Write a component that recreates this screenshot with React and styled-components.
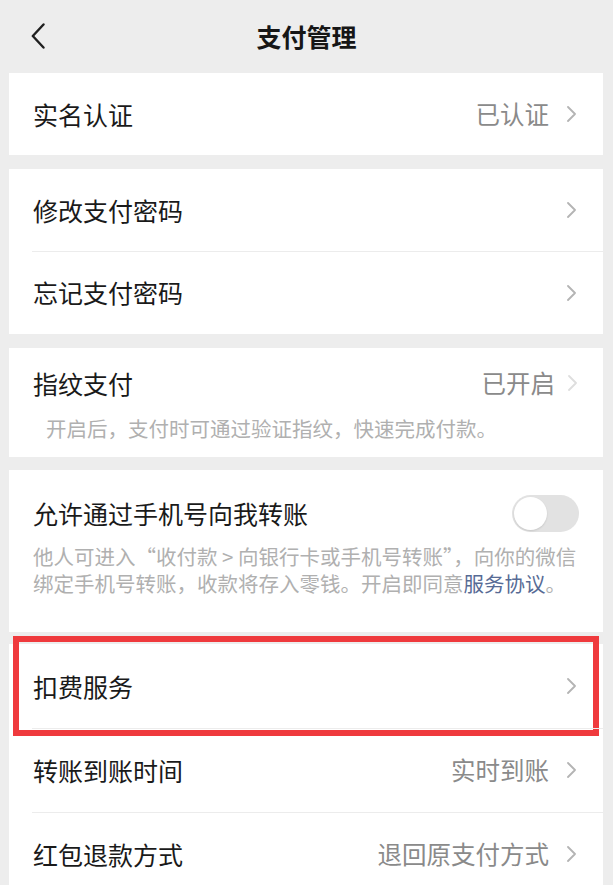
import React from "react";
import styled, { createGlobalStyle } from "styled-components";

const GlobalStyle = createGlobalStyle`
  html, body {
    margin: 0;
    padding: 0;
    background: #ededed;
    font-family: "Noto Sans CJK SC", "Noto Sans", sans-serif;
    -webkit-font-smoothing: antialiased;
  }
  * { box-sizing: border-box; }
`;

const Page = styled.div`
  display: flex;
  flex-direction: column;
  padding: 0 10px 0 9px;
  min-height: 885px;
  overflow: hidden;
`;

const Header = styled.header`
  height: 73px;
  display: grid;
  grid-template-columns: 1fr auto 1fr;
  align-items: center;
  margin: 0 -10px 0 -9px;
  padding: 0 0 0 31px;
`;

const BackButton = styled.button`
  justify-self: start;
  border: 0;
  background: none;
  padding: 0;
  width: 16px;
  height: 26px;
  display: flex;
  align-items: center;
  cursor: pointer;
  margin-top: -2px;
`;

const Title = styled.h1`
  margin: 0;
  font-size: 25px;
  font-weight: 700;
  color: #161616;
  letter-spacing: 0;
  margin-left: -31px;
  margin-top: -2px;
`;

const Card = styled.section`
  background: #ffffff;
  margin-top: ${(p) => p.$mt || 0}px;
  padding: ${(p) => p.$pad || "0"};
  position: relative;
`;

const Row = styled.div`
  position: relative;
  height: ${(p) => p.$h || 83}px;
  display: flex;
  align-items: center;
  padding: 0 27px 0 24px;

  ${(p) =>
    p.$divider &&
    `
    &::before {
      content: "";
      position: absolute;
      top: 0;
      left: 23px;
      right: 0;
      height: 1px;
      background: #ececec;
    }
  `}
`;

const TitleRow = styled.div`
  height: 70px;
  display: flex;
  align-items: center;
  padding: 0 24px 0 24px;
`;

const Label = styled.span`
  flex: 1;
  font-size: 25px;
  color: #1a1a1a;
  white-space: nowrap;
  line-height: 1;
`;

const Value = styled.span`
  font-size: 24.5px;
  color: #8a8a8a;
  white-space: nowrap;
  line-height: 1;
  margin-right: ${(p) => p.$gap ?? 18}px;
`;

const ChevronWrap = styled.span`
  display: flex;
  align-items: center;
  width: 9px;
  height: 16px;
  color: ${(p) => (p.$faded ? "#dedede" : "#b4b4b4")};
  margin-right: ${(p) => p.$shift ?? 0}px;
`;

const Desc = styled.p`
  margin: ${(p) => p.$mt ?? -4}px 0 0 0;
  padding: 0 20px 0 ${(p) => p.$indent || 24}px;
  font-size: ${(p) => p.$size || 20.5}px;
  line-height: ${(p) => p.$lh || 28}px;
  color: #b0b0b0;
  white-space: nowrap;
`;

const Link = styled.a`
  color: #576b95;
  text-decoration: none;
`;

const SwitchTrack = styled.span`
  width: 67px;
  height: 37px;
  border-radius: 19px;
  background: #e2e2e2;
  display: flex;
  align-items: center;
  padding: 0 2px;
  flex-shrink: 0;
`;

const SwitchKnob = styled.span`
  width: 33px;
  height: 33px;
  border-radius: 50%;
  background: #ffffff;
  box-shadow: 0 1px 2px rgba(0, 0, 0, 0.12);
`;

const Highlight = styled.span`
  position: absolute;
  top: -8px;
  bottom: -8px;
  left: 4px;
  right: 4px;
  border: 6px solid #ef3a3d;
  pointer-events: none;
`;

const Chevron = ({ faded, shift }) => (
  <ChevronWrap $faded={faded} $shift={shift}>
    <svg width="9" height="16" viewBox="0 0 9 16" fill="none">
      <path d="M1 1 L8 8 L1 15" stroke="currentColor" strokeWidth="1.8" strokeLinecap="round" strokeLinejoin="round" />
    </svg>
  </ChevronWrap>
);

export default function App() {
  return (
    <>
      <GlobalStyle />
      <Page>
        <Header>
          <BackButton aria-label="返回">
            <svg width="14" height="26" viewBox="0 0 14 26" fill="none">
              <path d="M12.5 1.5 L1.8 13 L12.5 24.5" stroke="#1f1f1f" strokeWidth="2.4" strokeLinecap="round" strokeLinejoin="round" />
            </svg>
          </BackButton>
          <Title>支付管理</Title>
          <span />
        </Header>

        <Card>
          <Row $h={82}>
            <Label>实名认证</Label>
            <Value>已认证</Value>
            <Chevron />
          </Row>
        </Card>

        <Card $mt={14}>
          <Row $h={82}>
            <Label>修改支付密码</Label>
            <Chevron />
          </Row>
          <Row $h={83} $divider>
            <Label>忘记支付密码</Label>
            <Chevron />
          </Row>
        </Card>

        <Card $mt={14} $pad="0 0 15px 0">
          <TitleRow>
            <Label>指纹支付</Label>
            <Value $gap={13}>已开启</Value>
            <Chevron faded shift={2} />
          </TitleRow>
          <Desc $indent={37} $size={20.5}>开启后，支付时可通过验证指纹，快速完成付款。</Desc>
        </Card>

        <Card $mt={13} $pad="8px 0 35px 0">
          <TitleRow>
            <Label>允许通过手机号向我转账</Label>
            <SwitchTrack>
              <SwitchKnob />
            </SwitchTrack>
          </TitleRow>
          <Desc $mt={-5} $lh={27}>
            他人可进入“收付款 &gt; 向银行卡或手机号转账”，向你的微信
            <br />
            绑定手机号转账，收款将存入零钱。开启即同意<Link>服务协议</Link>。
          </Desc>
        </Card>

        <Card $mt={12}>
          <Row $h={84}>
            <Label>扣费服务</Label>
            <Chevron />
            <Highlight />
          </Row>
          <Row $h={84} $divider>
            <Label>转账到账时间</Label>
            <Value>实时到账</Value>
            <Chevron />
          </Row>
          <Row $h={84} $divider>
            <Label>红包退款方式</Label>
            <Value>退回原支付方式</Value>
            <Chevron />
          </Row>
        </Card>
      </Page>
    </>
  );
}
